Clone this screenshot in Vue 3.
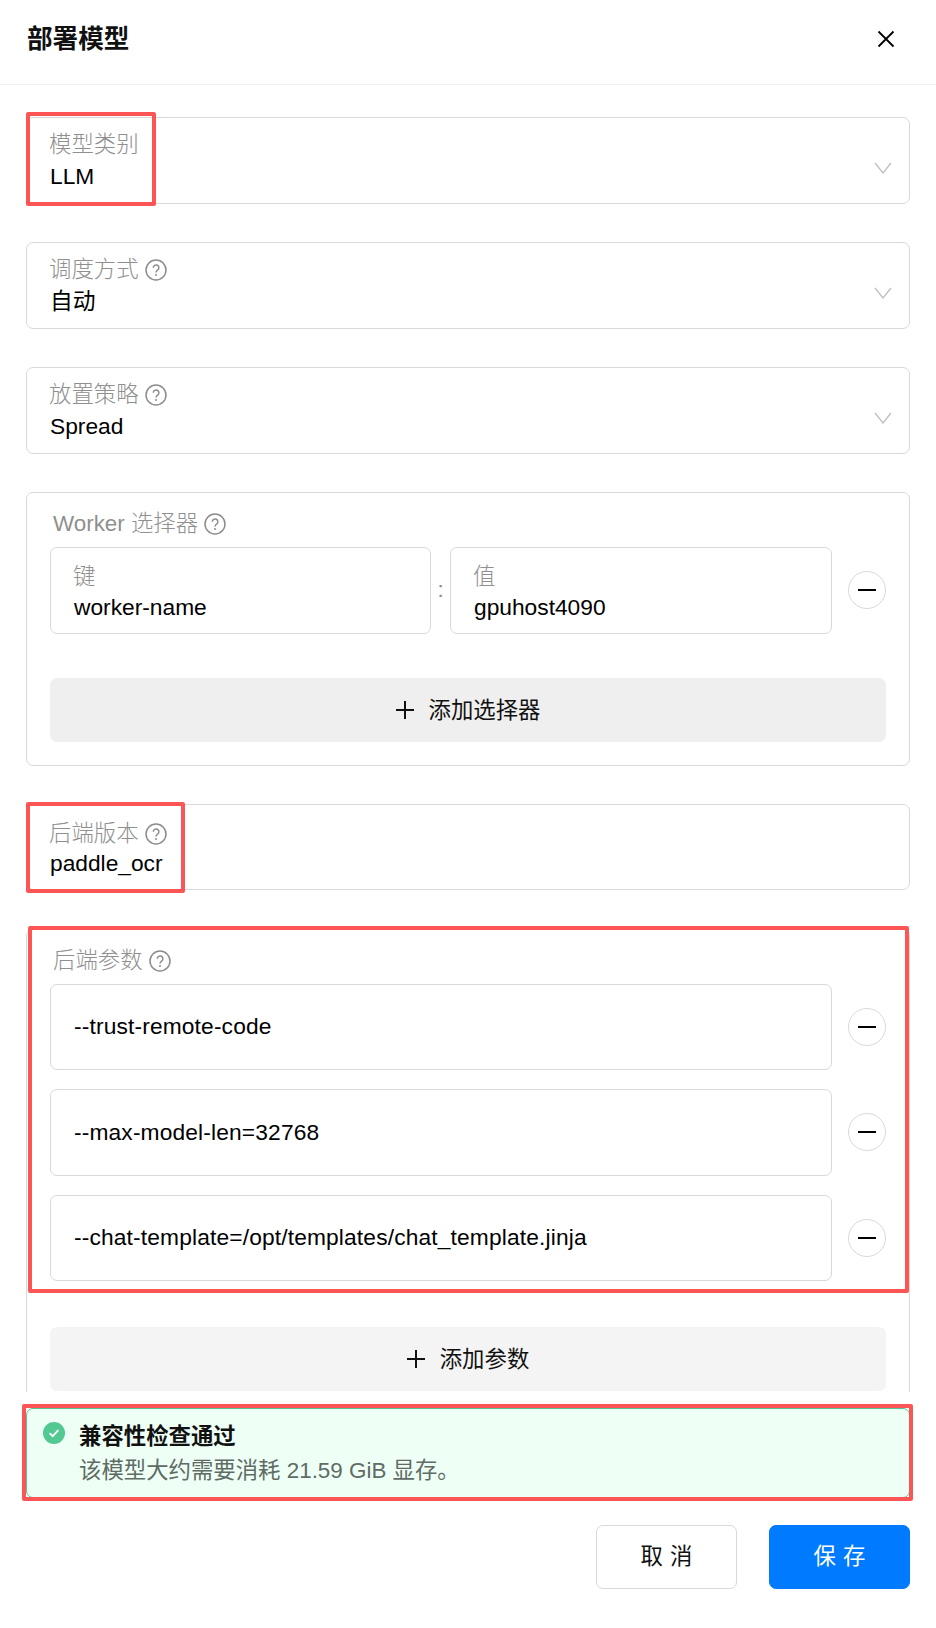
<template>
  <div class="modal">
    <header class="head">
      <h1>部署模型</h1>
      <button class="close" aria-label="关闭">
        <svg width="18" height="18" viewBox="0 0 18 18">
          <path d="M1.5 1.5l15 15M16.5 1.5l-15 15" stroke="#000" stroke-width="1.8" fill="none" />
        </svg>
      </button>
    </header>

    <div class="body">
      <div v-for="s in selects" :key="s.label" class="field">
        <div class="field-text">
          <div class="label">
            {{ s.label }}
            <svg v-if="s.help" class="help" viewBox="0 0 22 22">
              <circle cx="11" cy="11" r="10" />
              <path d="M8.3 8.8a2.8 2.8 0 1 1 4.3 2.3c-1 .7-1.6 1.2-1.6 2.3" />
              <circle class="dot" cx="11" cy="16" r="1" />
            </svg>
          </div>
          <div class="value">{{ s.value }}</div>
        </div>
        <svg class="chevron" width="18" height="12" viewBox="0 0 18 12">
          <path d="M1 1l8 10 8-10" fill="none" stroke="#bfbfbf" stroke-width="1.3" />
        </svg>
        <div v-if="s.mark" class="mark mark-type"></div>
      </div>

      <div class="group">
        <div class="label group-label">
          Worker 选择器
          <svg class="help" viewBox="0 0 22 22">
            <circle cx="11" cy="11" r="10" />
            <path d="M8.3 8.8a2.8 2.8 0 1 1 4.3 2.3c-1 .7-1.6 1.2-1.6 2.3" />
            <circle class="dot" cx="11" cy="16" r="1" />
          </svg>
        </div>
        <div class="row">
          <div class="input stacked key">
            <div class="label">键</div>
            <div class="value">worker-name</div>
          </div>
          <span class="colon">:</span>
          <div class="input stacked">
            <div class="label">值</div>
            <div class="value">gpuhost4090</div>
          </div>
          <button class="minus" aria-label="删除">
            <svg width="18" height="2" viewBox="0 0 18 2"><path d="M0 1h18" stroke="#000" stroke-width="2" /></svg>
          </button>
        </div>
        <button class="add">
          <svg width="18" height="18" viewBox="0 0 18 18"><path d="M9 0v18M0 9h18" stroke="#111" stroke-width="2" /></svg>
          <span>添加选择器</span>
        </button>
      </div>

      <div class="field version">
        <div class="field-text">
          <div class="label">
            后端版本
            <svg class="help" viewBox="0 0 22 22">
              <circle cx="11" cy="11" r="10" />
              <path d="M8.3 8.8a2.8 2.8 0 1 1 4.3 2.3c-1 .7-1.6 1.2-1.6 2.3" />
              <circle class="dot" cx="11" cy="16" r="1" />
            </svg>
          </div>
          <div class="value">paddle_ocr</div>
        </div>
        <div class="mark mark-version"></div>
      </div>

      <div class="group">
        <div class="label group-label">
          后端参数
          <svg class="help" viewBox="0 0 22 22">
            <circle cx="11" cy="11" r="10" />
            <path d="M8.3 8.8a2.8 2.8 0 1 1 4.3 2.3c-1 .7-1.6 1.2-1.6 2.3" />
            <circle class="dot" cx="11" cy="16" r="1" />
          </svg>
        </div>
        <div class="params">
          <div v-for="p in params" :key="p" class="row">
            <div class="input single">{{ p }}</div>
            <button class="minus" aria-label="删除">
              <svg width="18" height="2" viewBox="0 0 18 2"><path d="M0 1h18" stroke="#000" stroke-width="2" /></svg>
            </button>
          </div>
        </div>
        <button class="add faded">
          <svg width="18" height="18" viewBox="0 0 18 18"><path d="M9 0v18M0 9h18" stroke="#111" stroke-width="2" /></svg>
          <span>添加参数</span>
        </button>
        <div class="mark mark-params"></div>
      </div>
    </div>

    <div class="alert">
      <svg class="ok" width="22" height="22" viewBox="0 0 22 22">
        <circle cx="11" cy="11" r="11" fill="#52c993" />
        <path d="M6.6 11.2l3.1 3 5.7-6" fill="none" stroke="#fff" stroke-width="1.7" />
      </svg>
      <div>
        <div class="alert-title">兼容性检查通过</div>
        <div class="alert-desc">该模型大约需要消耗 21.59 GiB 显存。</div>
      </div>
      <div class="mark mark-alert"></div>
    </div>

    <footer class="foot">
      <button class="btn"><span>取消</span></button>
      <button class="btn primary"><span>保存</span></button>
    </footer>
  </div>
</template>

<script setup>
const selects = [
  { label: "模型类别", value: "LLM", mark: true },
  { label: "调度方式", value: "自动", help: true },
  { label: "放置策略", value: "Spread", help: true },
];

const params = [
  "--trust-remote-code",
  "--max-model-len=32768",
  "--chat-template=/opt/templates/chat_template.jinja",
];
</script>

<style>
html,
body {
  margin: 0;
  background: #fff;
}
</style>

<style scoped>
.modal {
  height: 100vh;
  display: flex;
  flex-direction: column;
  box-sizing: border-box;
  background: #fff;
  color: #000;
  font-family: "Liberation Sans", "Noto Sans CJK SC", sans-serif;
  font-size: 22.4px;
  overflow: hidden;
}
button {
  font: inherit;
  padding: 0;
  cursor: pointer;
}
.head {
  flex: none;
  height: 85px;
  box-sizing: border-box;
  border-bottom: 1px solid #f0f0f0;
  padding: 0 41px 6px 27px;
  display: flex;
  align-items: center;
  justify-content: space-between;
}
.head h1 {
  margin: 0;
  font-size: 25.6px;
  font-weight: 700;
  line-height: 36px;
  color: #111;
}
.close {
  width: 18px;
  height: 18px;
  border: none;
  background: none;
  line-height: 0;
}
.body {
  flex: 1;
  min-height: 0;
  overflow: hidden;
  padding: 32px 26px 0;
}
.field {
  position: relative;
  height: 86.5px;
  margin-bottom: 38.5px;
  box-sizing: border-box;
  border: 1px solid #d9d9d9;
  border-radius: 7px;
  padding: 12px 17px 0 22px;
  display: flex;
  justify-content: space-between;
}
.label {
  display: flex;
  align-items: center;
  gap: 6px;
  height: 30px;
  line-height: 30px;
  color: #8f8f8f;
  font-weight: 300;
}
.value {
  height: 32px;
  line-height: 32px;
  padding-left: 1px;
  color: #000;
  font-size: 22.75px;
}
.version {
  padding-top: 14px;
}
.version .value {
  margin-top: -2px;
}
.help {
  width: 22px;
  height: 22px;
  flex: none;
  fill: none;
  stroke: #8c8c8c;
  stroke-width: 1.5;
}
.help .dot {
  fill: #8c8c8c;
  stroke: none;
}
.chevron {
  margin-top: 32px;
}
.group {
  position: relative;
  margin-bottom: 38px;
  box-sizing: border-box;
  border: 1px solid #d9d9d9;
  border-radius: 7px;
  padding: 16px 23px 23px;
}
.group-label {
  padding-left: 3px;
  margin-bottom: 8px;
}
.row {
  display: flex;
  align-items: center;
}
.input {
  flex: 1;
  min-width: 0;
  height: 86.5px;
  box-sizing: border-box;
  border: 1px solid #d9d9d9;
  border-radius: 7px;
  padding: 0 22px;
}
.key {
  flex: none;
  width: 381px;
}
.stacked {
  padding-top: 14px;
}
.stacked .value {
  margin-top: -1px;
}
.single {
  display: flex;
  align-items: center;
  padding-left: 23px;
  font-size: 22.75px;
  letter-spacing: 0.15px;
}
.colon {
  flex: none;
  width: 19px;
  text-align: center;
  color: #8c8c8c;
}
.minus {
  flex: none;
  width: 38px;
  height: 38px;
  margin-left: 16px;
  border: 1px solid #d9d9d9;
  border-radius: 50%;
  background: #fff;
  display: flex;
  align-items: center;
  justify-content: center;
}
.params {
  display: flex;
  flex-direction: column;
  gap: 19px;
}
.add {
  width: 100%;
  height: 64px;
  margin-top: 44px;
  border: none;
  border-radius: 7px;
  background: #efefef;
  color: #111;
  display: flex;
  align-items: center;
  justify-content: center;
  gap: 15px;
}
.add span {
  padding-bottom: 3px;
}
.add.faded {
  margin-top: 45.5px;
  background: #f4f4f4;
}
.alert {
  position: relative;
  flex: none;
  margin: 16px 26px 0;
  height: 90px;
  box-sizing: border-box;
  border: 1px solid #52c993;
  border-radius: 7px;
  background: #eefff5;
  padding: 13px 16px 0;
  display: flex;
  gap: 14px;
}
.ok {
  flex: none;
}
.alert-title {
  line-height: 30px;
  font-weight: 700;
  color: #111;
}
.alert-desc {
  line-height: 30px;
  margin-top: 4px;
  color: #5f6b65;
}
.foot {
  flex: none;
  display: flex;
  justify-content: flex-end;
  gap: 32px;
  padding: 27px 26px 39px;
}
.btn {
  width: 141px;
  height: 64px;
  border: 1px solid #d9d9d9;
  border-radius: 7px;
  background: #fff;
  color: #111;
  letter-spacing: 7px;
  text-indent: 7px;
}
.btn span {
  display: block;
  padding-bottom: 6px;
}
.btn.primary {
  border-color: #007aff;
  background: #007aff;
  color: #fff;
}
.mark {
  position: absolute;
  box-sizing: border-box;
  border: 4px solid #fc5555;
  border-radius: 2px;
  pointer-events: none;
}
.mark-type {
  left: -1px;
  top: -6px;
  width: 130px;
  height: 94px;
}
.mark-version {
  left: -1px;
  top: -3px;
  width: 159px;
  height: 91px;
}
.mark-params {
  left: 1px;
  right: 0;
  top: -4px;
  height: 367px;
}
.mark-alert {
  left: -5px;
  right: -4px;
  top: -5px;
  bottom: -4px;
}
</style>
